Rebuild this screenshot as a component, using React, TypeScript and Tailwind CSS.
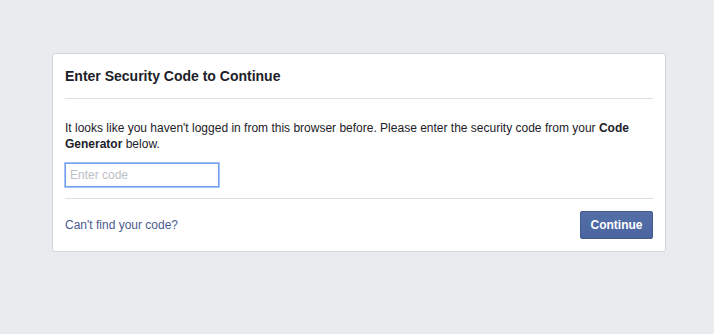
import React from 'react';

export default function App() {
  return (
    <div className="min-h-[334px] w-full bg-[#e9ebee] pt-[53px] font-['Liberation_Sans',Arial,sans-serif]">
      <div className="ml-[52px] w-[614px] rounded-[3px] border border-[#d3d6db] bg-white">
        {/* Header */}
        <div className="mx-3 border-b border-[#dddfe2] pt-[13px] pb-[13px]">
          <h2 className="text-[14px] leading-[18px] font-bold text-[#1d2129]">
            Enter Security Code to Continue
          </h2>
        </div>

        {/* Body */}
        <div className="mx-3 border-b border-[#dddfe2] pt-[21px] pb-[11px]">
          <p className="text-[12px] leading-[16px] text-[#1d2129]">
            It looks like you haven't logged in from this browser before. Please enter the security code from your <b>Code Generator</b> below.
          </p>
          <input
            type="text"
            placeholder="Enter code"
            className="mt-[11px] block h-[24px] w-[154px] rounded-none border border-[#6f9ff0] px-[4px] text-[12px] text-[#1d2129] shadow-[0_0_0_1px_#a8c4f5] outline-none placeholder:text-[#bcc0c6]"
          />
        </div>

        {/* Footer */}
        <div className="mx-3 flex items-center justify-between pt-3 pb-[12px]">
          <a href="#" className="text-[12px] leading-[16px] text-[#4b5a8e] hover:underline">
            Can't find your code?
          </a>
          <button className="h-[28px] w-[73px] rounded-[2px] border border-[#435a8b] bg-gradient-to-b from-[#5470a8] to-[#4a64a0] text-[12px] font-bold text-white">
            Continue
          </button>
        </div>
      </div>
    </div>
  );
}
